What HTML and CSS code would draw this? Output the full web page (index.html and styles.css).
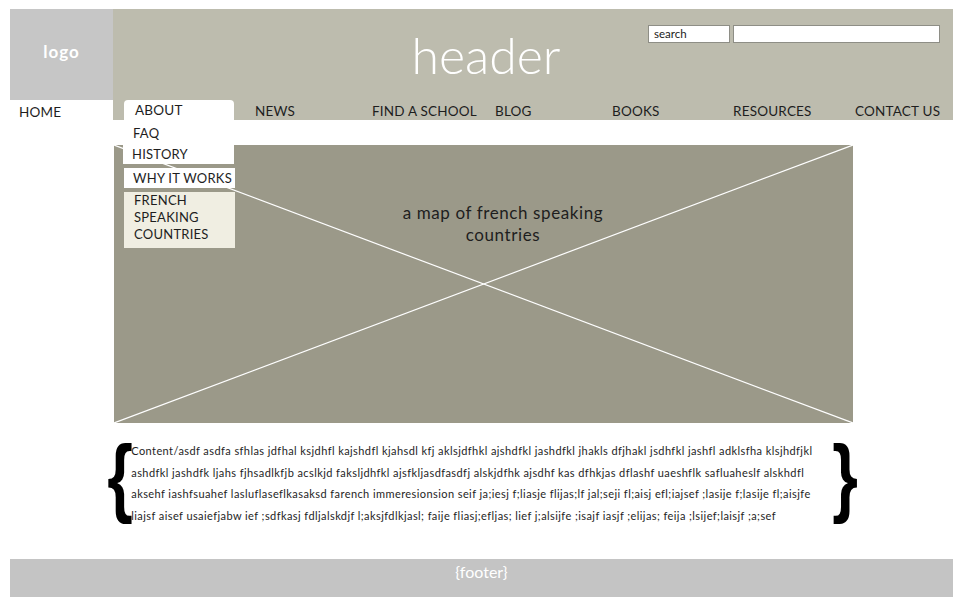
FILE: index.html
```html
<!DOCTYPE html>
<html>
<head>
<meta charset="utf-8">
<title>Wireframe</title>
<link rel="stylesheet" href="styles.css">
</head>
<body>
<div class="page">
  <header class="site-header">
    <div class="top">
      <div class="logo">logo</div>
      <div class="banner">
        <h1 class="title">header</h1>
        <form class="search">
          <span class="search-label">search</span>
          <span class="search-input"></span>
        </form>
      </div>
    </div>
    <nav class="nav">
      <ul class="menu">
        <li class="item home">HOME</li>
        <li class="item about">
          <span class="tab">ABOUT</span>
          <ul class="dropdown">
            <li class="sub faq">FAQ</li>
            <li class="sub history">HISTORY</li>
            <li class="sub why">WHY IT WORKS</li>
            <li class="sub french">FRENCH<br>SPEAKING<br>COUNTRIES</li>
          </ul>
        </li>
        <li class="item">NEWS</li>
        <li class="item">FIND A SCHOOL</li>
        <li class="item">BLOG</li>
        <li class="item">BOOKS</li>
        <li class="item">RESOURCES</li>
        <li class="item">CONTACT US</li>
      </ul>
    </nav>
  </header>

  <main class="main">
    <div class="map">
      <svg class="map-x" viewBox="0 0 739 278" preserveAspectRatio="none">
        <line x1="0" y1="0" x2="739" y2="278" stroke="#ffffff" stroke-width="1.2"/>
        <line x1="739" y1="0" x2="0" y2="278" stroke="#ffffff" stroke-width="1.2"/>
      </svg>
      <p class="map-caption">a map of french speaking<br>countries</p>
    </div>

    <section class="content">
      <span class="brace">{</span>
      <p class="copy">Content/asdf asdfa sfhlas jdfhal ksjdhfl kajshdfl kjahsdl kfj aklsjdfhkl ajshdfkl jashdfkl jhakls dfjhakl jsdhfkl jashfl adklsfha klsjhdfjkl<br>ashdfkl jashdfk ljahs fjhsadlkfjb acslkjd faksljdhfkl ajsfkljasdfasdfj alskjdfhk ajsdhf kas dfhkjas dflashf uaeshflk safluaheslf alskhdfl<br>aksehf iashfsuahef lasluflaseflkasaksd farench immeresionsion seif ja;iesj f;liasje flijas;lf jal;seji fl;aisj efl;iajsef ;lasije f;lasije fl;aisjfe<br>liajsf aisef usaiefjabw ief ;sdfkasj fdljalskdjf l;aksjfdlkjasl; faije fliasj;efljas; lief j;alsijfe ;isajf iasjf ;elijas; feija ;lsijef;laisjf ;a;sef</p>
      <span class="brace">}</span>
    </section>
  </main>

  <footer class="footer">{footer}</footer>
</div>
</body>
</html>
```

FILE: styles.css
```css
* { box-sizing: border-box; }

html, body {
  margin: 0;
  padding: 0;
  background: #ffffff;
}

body {
  font-family: Lato, "Noto Sans", sans-serif;
  color: #1e1e1e;
}

.page {
  width: 965px;
  padding: 9px 12px 0 10px;
}

/* ---------- header ---------- */
.site-header {
  background: #bdbcae;
}

.top {
  display: flex;
  height: 91px;
}

.logo {
  width: 103px;
  background: #c6c6c6;
  color: #ffffff;
  font-weight: 700;
  font-size: 17px;
  letter-spacing: 1px;
  display: flex;
  align-items: center;
  justify-content: center;
  padding-bottom: 6px;
}

.banner {
  flex: 1;
  display: grid;
  grid-template-columns: 1fr auto;
}

.title {
  grid-area: 1 / 1 / 2 / 3;
  margin: 21px 0 0;
  padding-right: 94px;
  text-align: center;
  font-size: 50px;
  line-height: 50px;
  font-weight: 300;
  color: #ffffff;
}

.search {
  grid-area: 1 / 2 / 2 / 3;
  align-self: start;
  display: flex;
  gap: 3px;
  margin: 16px 13px 0 0;
}

.search-label,
.search-input {
  height: 18px;
  background: #ffffff;
  border: 1px solid #8e8e86;
  font-size: 11.5px;
  line-height: 16px;
  color: #222;
}

.search-label {
  width: 82px;
  padding-left: 5px;
}

.search-input {
  width: 207px;
}

/* ---------- nav ---------- */
.nav {
  height: 20px;
}

.menu {
  list-style: none;
  margin: 0;
  padding: 0;
  display: grid;
  grid-template-columns: 114px 131px 117px 123px 117px 121px 122px 1fr;
  height: 20px;
}

.item {
  font-size: 13.5px;
  letter-spacing: 0.2px;
  line-height: 20px;
  padding-top: 1px;
  white-space: nowrap;
  color: #1e1e1e;
}

.home {
  width: 103px;
  background: #ffffff;
  padding: 2px 0 0 9px;
}

.about {
  position: relative;
  z-index: 2;
  padding-top: 0;
}

.tab {
  display: block;
  width: 110px;
  height: 20px;
  background: #ffffff;
  border-radius: 4px 4px 0 0;
  padding: 1px 0 0 11px;
  line-height: 19px;
}

.dropdown {
  position: absolute;
  top: 20px;
  left: -1px;
  list-style: none;
  margin: 0;
  padding: 0;
  width: 112px;
}

.sub {
  font-size: 13px;
  letter-spacing: 0.25px;
  background: #ffffff;
  white-space: nowrap;
}

.faq {
  width: 111px;
  height: 23px;
  line-height: 27px;
  padding-left: 10px;
}

.history {
  width: 111px;
  height: 21px;
  line-height: 22px;
  padding-left: 9px;
}

.why {
  margin: 4px 0 0 1px;
  width: 111px;
  height: 20px;
  line-height: 21px;
  padding-left: 9px;
}

.french {
  margin: 4px 0 0 1px;
  width: 111px;
  background: #f0eee2;
  line-height: 17px;
  padding: 0 0 5px 10px;
}

/* ---------- main ---------- */
.main {
  padding-top: 25px;
}

.map {
  position: relative;
  z-index: 1;
  width: 739px;
  height: 278px;
  margin-left: 104px;
  background: #9b9989;
}

.map-x {
  position: absolute;
  inset: 0;
  width: 100%;
  height: 100%;
  display: block;
}

.map-caption {
  position: relative;
  margin: 0;
  padding: 57px 0 0 39px;
  text-align: center;
  font-size: 17px;
  letter-spacing: 0.6px;
  line-height: 22px;
  color: #1e1e1e;
}

.content {
  display: flex;
  align-items: flex-start;
  margin: 17px 0 0 93px;
  width: 759px;
}

.brace {
  font-family: "Liberation Sans", Arial, sans-serif;
  font-weight: 700;
  font-size: 88px;
  line-height: 88px;
  color: #000;
  margin: -8px 0 -8px;
  transform: scaleX(0.75);
}

.copy {
  flex: 1;
  margin: 0 0 0 -6px;
  font-size: 11px;
  letter-spacing: 0.42px;
  line-height: 21.7px;
  color: #1e1e1e;
  white-space: nowrap;
}

/* ---------- footer ---------- */
.footer {
  margin-top: 32px;
  height: 38px;
  background: #c4c4c4;
  color: #ffffff;
  text-align: center;
  font-size: 16px;
  line-height: 26px;
}
```
